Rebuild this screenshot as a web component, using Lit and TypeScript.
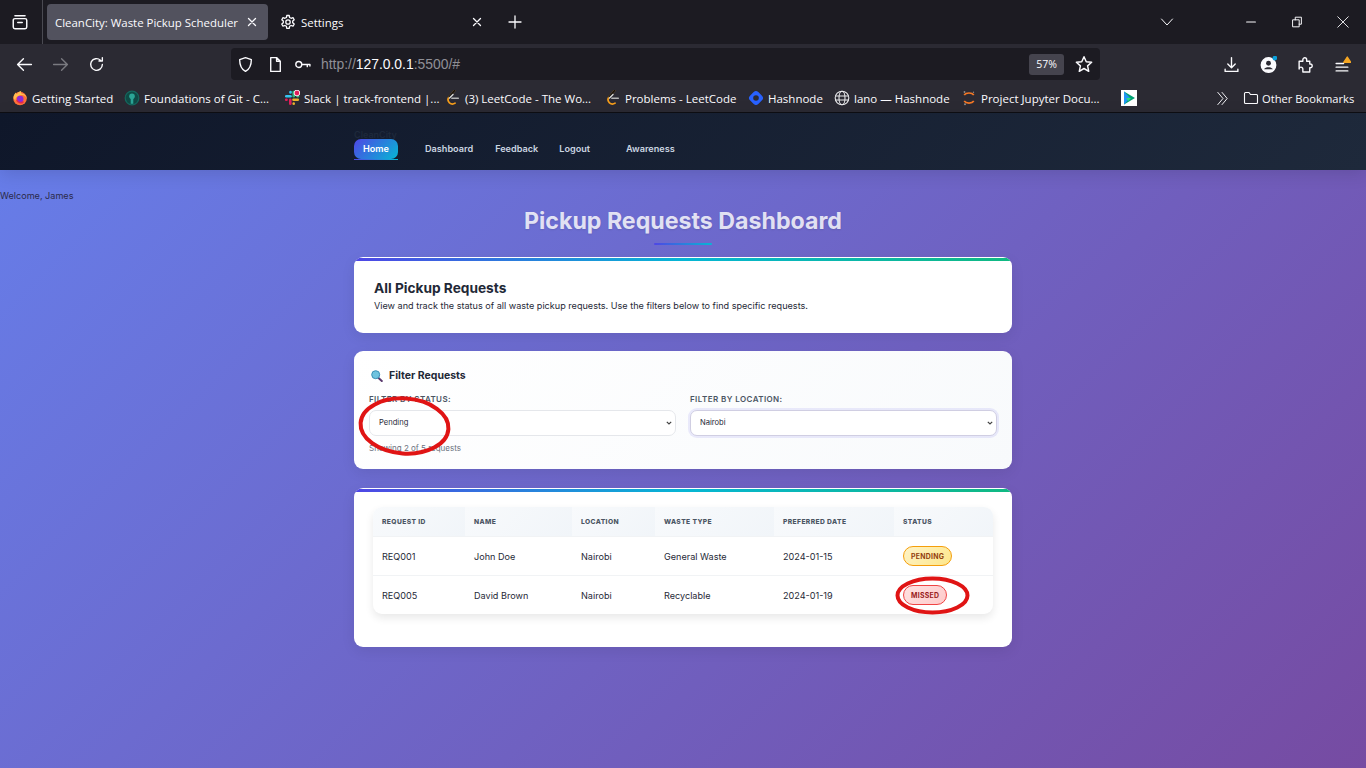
import { LitElement, html, css, svg } from 'lit';
import { customElement } from 'lit/decorators.js';

const ic = (body: unknown, size = 16, vb = 16) => html`<svg width=${size} height=${size} viewBox="0 0 ${vb} ${vb}" fill="none" stroke="currentColor" stroke-width="1.3" stroke-linecap="round" stroke-linejoin="round">${body}</svg>`;

const leet = svg`<path d="M9.500.8 4.200 6.800c-1.700 2-1.400 4.300.3 6 1.700 1.500 3.800 1.500 5.600.3" stroke="#f89f1b" stroke-width="1.700"/><path d="M9.500.8 4.200 6.800" stroke="#111" stroke-width="1.700"/><path d="M6.800 8.300h6.500" stroke="#b3b3b3" stroke-width="1.500"/><path d="M4.500 8 8 4.500M12 4.500" stroke="#d8d8d8" stroke-width="1.400"/>`;

const bookmarks = [
  { label: 'Getting Started', width: 112, icon: svg`<circle cx="8" cy="8.500" r="6.800" fill="#ff7139" stroke="none"/><path d="M1.500 8c0-3 1.500-4.500 2.500-5.500 0 1 .5 1.500 1 1.500C6 2.500 8 1 9.500.8c-.8 1.200-.6 2.200 0 2.700 3 .3 5.500 2.500 5.300 5.500C14 6 11.500 4.500 8.500 5.200 5 6 3 8 3.500 11z" fill="#ffbd4f" stroke="none"/><circle cx="8.200" cy="9" r="3.300" fill="#8b2ad8" stroke="none"/><path d="M5 10.500c1 2 4 3 6 1.500" stroke="#e22850" stroke-width="1.600"/>` },
  { label: 'Foundations of Git - C...', width: 160, icon: svg`<circle cx="8" cy="8" r="6.800" fill="#0f4a45" stroke="#14695f" stroke-width="1.200"/><circle cx="8" cy="6.300" r="2.800" fill="#2ba596" stroke="none"/><path d="M6.700 8h2.600v5.800H6.700z" fill="#2ba596" stroke="none"/>` },
  { label: 'Slack | track-frontend |...', width: 161, icon: svg`<g stroke-width="2.600"><path d="M2.300 6.300h4.200" stroke="#36c5f0"/><path d="M6.500 2v.5" stroke="#36c5f0"/><path d="M9.700 2v4.300" stroke="#2eb67d"/><path d="M13.800 6.300h.1" stroke="#2eb67d"/><path d="M13.800 9.700H9.500" stroke="#ecb22e"/><path d="M9.700 13.800v-.3" stroke="#ecb22e"/><path d="M6.300 13.800V9.700" stroke="#e01e5a"/><path d="M2.200 9.700h.3" stroke="#e01e5a"/></g><circle cx="13" cy="3" r="2.900" fill="#e01e5a" stroke="#fff" stroke-width=".9"/>` },
  { label: '(3) LeetCode - The Wo...', width: 160, icon: leet },
  { label: 'Problems - LeetCode', width: 143, icon: leet },
  { label: 'Hashnode', width: 86, icon: svg`<rect x="2.900" y="2.900" width="10.200" height="10.200" rx="2.500" fill="#2962ff" stroke="#2962ff" stroke-width="1.500" transform="rotate(45 8 8)"/><circle cx="8" cy="8" r="2.800" fill="#2b2a33" stroke="none"/>` },
  { label: 'lano — Hashnode', width: 127, icon: svg`<g stroke="#e8e8ea" stroke-width="1.100"><circle cx="8" cy="8" r="6.800"/><ellipse cx="8" cy="8" rx="3" ry="6.800"/><path d="M1.500 6h13M1.500 10h13"/></g>` },
  { label: 'Project Jupyter Docu...', width: 160, icon: svg`<path d="M3.200 5C5 2.300 11 2.300 12.800 5M3.200 11c1.800 2.700 7.800 2.700 9.600 0" stroke="#f37726" stroke-width="1.700" stroke-linecap="butt"/><circle cx="3.500" cy="2" r=".9" fill="#8d8d8d" stroke="none"/><circle cx="12.500" cy="2.300" r=".7" fill="#8d8d8d" stroke="none"/><circle cx="4" cy="14.300" r="1" fill="#8d8d8d" stroke="none"/>` },
  { label: '', width: 94, icon: svg`<rect width="16" height="16" fill="#fff" stroke="none"/><path d="M3 1.500v13l11-6.500z" fill="#00a173" stroke="none"/><path d="M3 1.500l6 6.500-6 6.500z" fill="#2196f3" stroke="none"/><path d="M5 8h5l-2.500 3z" fill="#29e07f" stroke="none"/>` },
];

const requests = [
  { id: 'REQ001', name: 'John Doe', location: 'Nairobi', type: 'General Waste', date: '2024-01-15', status: 'Pending' },
  { id: 'REQ005', name: 'David Brown', location: 'Nairobi', type: 'Recyclable', date: '2024-01-19', status: 'Missed' },
];

@customElement('browser-chrome')
export class BrowserChrome extends LitElement {
  static styles = css`
    :host { display: block; font-family: "Open Sans", "Noto Sans", sans-serif; color: #fbfbfe; }
    .tabs { height: 44px; background: #1c1b22; display: flex; align-items: center; }
    .tab-view { height: 44px; display: flex; align-items: center; justify-content: center; border-right: 1px solid #4a4a52; margin-right: 4px; width: 39px; padding-right: 3px; }
    .tab { height: 36px; border-radius: 4px; display: flex; align-items: center; font-size: 11.450px; box-sizing: border-box; }
    .tab.active { width: 221px; background: #52525e; padding: 0 8px; justify-content: space-between; }
    .tab.settings { width: 224px; padding: 0 7px 0 12px; gap: 5px; }
    .tab.settings .close { margin-left: auto; }
    .close { width: 16px; height: 16px; display: flex; }
    .new { margin-left: 15px; display: flex; }
    .win { margin-left: auto; display: flex; align-items: center; height: 44px; }
    .win .all { margin-right: 53px; display: flex; }
    .win .btn { width: 46px; display: flex; justify-content: center; }
    .toolbar { height: 40px; background: #2b2a33; display: flex; align-items: center; }
    .nav-btn { width: 36px; display: flex; justify-content: center; }
    .nav-btn:first-child { margin-left: 6px; }
    .dim { color: #7a7a80; }
    .url { margin-left: 117px; width: 869px; height: 32px; border-radius: 4px; background: #1c1b22; display: flex; align-items: center; box-sizing: border-box; padding: 0 7px; }
    .url svg { flex: none; }
    .url span { display: flex; }
    .url .shield { margin-right: 13px; margin-left: -1px; }
    .url .doc { margin-right: 10px; }
    .url .key { margin-right: 10px; }
    .url .addr { display: block; font-size: 13.900px; color: #8f8f96; font-family: "Liberation Sans", sans-serif; }
    .addr b { color: #fbfbfe; font-weight: 400; }
    .url .zoom { margin-left: auto; margin-right: 11px; width: 35px; height: 21px; border-radius: 3px; background: #45444e; font-size: 10.500px; align-items: center; justify-content: center; }
    .tools { margin-left: auto; display: flex; align-items: center; gap: 20px; padding-right: 15px; }
    .tools span { display: flex; }
    .bookmarks { height: 28px; background: #2b2a33; display: flex; align-items: center; padding-left: 12px; font-size: 11.500px; }
    .bm { display: flex; align-items: center; gap: 4px; white-space: nowrap; flex: none; }
    .bm svg { flex: none; }
    .more { margin-left: auto; display: flex; align-items: center; margin-right: 12px; white-space: nowrap; font-size: 11.200px; }
    .more .chev { margin-right: 13px; display: flex; }
    .more .folder { display: flex; margin-right: 3px; }
  `;

  render() {
    return html`
      <div class="tabs">
        <div class="tab-view">${ic(svg`<rect x="2" y="5" width="12" height="9" rx="1.500"/><path d="M3.500 2.500h9M6 8.500h4"/>`, 18)}</div>
        <div class="tab active">
          <span>CleanCity: Waste Pickup Scheduler</span>
          <span class="close">${ic(svg`<path d="M4.500 4.500l7 7M11.500 4.500l-7 7"/>`)}</span>
        </div>
        <div class="tab settings">
          ${ic(svg`<circle cx="8" cy="8" r="2.200"/><path d="M6.800 1.500h2.400l.4 2 1.500.8 1.900-.7 1.200 2.100-1.500 1.300v1.800l1.500 1.300-1.200 2.100-1.900-.7-1.500.8-.4 2H6.800l-.4-2-1.500-.8-1.900.7-1.200-2.100 1.500-1.300V7L1.800 5.700 3 3.600l1.900.7 1.500-.8z"/>`)}
          <span>Settings</span>
          <span class="close">${ic(svg`<path d="M4.500 4.500l7 7M11.500 4.500l-7 7"/>`)}</span>
        </div>
        <span class="new">${ic(svg`<path d="M8 2v12M2 8h12"/>`)}</span>
        <div class="win">
          <span class="all">${ic(svg`<path d="M2.500 5 8 11l5.500-6" stroke-width="1"/>`)}</span>
          <span class="btn">${ic(svg`<path d="M3 8h10" />`, 14)}</span>
          <span class="btn">${ic(svg`<path d="M3.500 5.500h7v8h-7zM6 5.500V2.500h7v8h-2.500" stroke-linecap="square" stroke-width="1.100"/>`, 14)}</span>
          <span class="btn">${ic(svg`<path d="M2 2l12 12M14 2 2 14" stroke-width="1"/>`, 14)}</span>
        </div>
      </div>
      <div class="toolbar">
        <span class="nav-btn">${ic(svg`<path d="M14.500 8h-13M7 2.500 1.500 8 7 13.500"/>`, 17)}</span>
        <span class="nav-btn dim">${ic(svg`<path d="M1.500 8h13M9 2.500 14.500 8 9 13.500"/>`, 17)}</span>
        <span class="nav-btn">${ic(svg`<path d="M13.500 8a5.500 5.500 0 1 1-1.800-4.100M13.500 1.500v3.200h-3.200"/>`, 17)}</span>
        <div class="url">
          <span class="shield">${ic(svg`<path d="M8 1.500 2.500 3.500c0 5 1 8.500 5.500 11 4.500-2.500 5.500-6 5.500-11z"/>`, 17)}</span>
          <span class="doc">${ic(svg`<path d="M3.500 1.500h5.500l3.500 3.500v9.500h-9zM9 1.500V5h3.500"/>`, 17)}</span>
          <span class="key">${ic(svg`<circle cx="4.500" cy="8" r="2.800"/><path d="M7.500 8H15M12.500 8v2M15 8v1.500"/>`, 17)}</span>
          <span class="addr">http://<b>127.0.0.1</b>:5500/#</span>
          <span class="zoom">57%</span>
          <span>${ic(svg`<path d="M8 1.500 10 6l4.800.5-3.600 3.200 1 4.800L8 12l-4.200 2.500 1-4.800L1.200 6.500 6 6z"/>`, 18)}</span>
        </div>
        <div class="tools">
          <span>${ic(svg`<path d="M8 1.500v9M4.500 7.500 8 11l3.500-3.500M2 12.500v2h12v-2"/>`, 17)}</span>
          <span>${ic(svg`<circle cx="8" cy="8.500" r="6.800" fill="currentColor"/><circle cx="8" cy="6.800" r="2.300" fill="#2b2a33" stroke="none"/><path d="M3.900 12.500c1-2.500 7.200-2.500 8.200 0" fill="#2b2a33" stroke="none"/><circle cx="14" cy="2" r="2.200" fill="#0a9ed9" stroke="none"/>`, 17)}</span>
          <span>${ic(svg`<path d="M2 5h3.500V3.500a1.800 1.800 0 0 1 3.600 0V5h2.900v2.500h.5a1.800 1.800 0 0 1 0 3.600H12V15H5.500v-2.800a1.700 1.700 0 0 0-3.500 0z"/>`, 17)}</span>
          <span>${ic(svg`<path d="M2 7h7M2 10.500h11M2 14h11"/><path d="M12.500 1 15.800 6H9.200z" fill="#f5a623" stroke="#f5a623"/>`, 17)}</span>
        </div>
      </div>
      <div class="bookmarks">
        ${bookmarks.map((b) => html`<div class="bm" style="width:${b.width}px">${ic(b.icon)}<span>${b.label}</span></div>`)}
        <div class="more">
          <span class="chev">${ic(svg`<path d="M3 1.500 8.500 8 3 14.500M7.500 1.500 13 8l-5.500 6.500" stroke-width="1"/>`, 15)}</span>
          <span class="folder">${ic(svg`<path d="M1.500 12.500v-9A1 1 0 0 1 2.500 2.500h3.500l1.500 2h6a1 1 0 0 1 1 1v7a1 1 0 0 1-1 1h-11a1 1 0 0 1-1-1z" stroke-width="1.100"/>`)}</span>
          <span>Other Bookmarks</span>
        </div>
      </div>
    `;
  }
}

@customElement('app-root')
export class AppRoot extends LitElement {
  static styles = css`
    :host { display: block; width: 1366px; height: 768px; overflow: hidden; font-family: Inter, "Liberation Sans", sans-serif; }
    .page { position: relative; height: 656px; background: linear-gradient(135deg, #667eea 0%, #764ba2 100%); color: #1f2937; }
    .top { height: 58px; box-sizing: border-box; border-top: 1px solid #0d0d12; background: linear-gradient(135deg, #0f172a, #1e293b); box-shadow: 0 4px 16px rgba(0,0,0,.12); padding-left: 354px; position: relative; }
    .brand { position: absolute; top: 16px; left: 354px; font-size: 9px; font-weight: 600; color: #1e293b; }
    .links { display: flex; align-items: flex-start; height: 20px; margin-top: 26px; font-size: 9.150px; line-height: 19px; font-weight: 600; color: #cbd5e1; }
    .links a { flex: none; }
    .home { width: 44px; height: 20px; box-sizing: border-box; border-radius: 7px; background: linear-gradient(135deg, #4f46e5, #06b6d4); color: #fff; text-align: center; margin-right: 27px; position: relative; }
    .home::after { content: ""; position: absolute; left: 0; right: 0; bottom: -1px; height: 1px; background: linear-gradient(90deg, #4f46e5, #06b6d4); }
    .links a:nth-child(2) { margin-right: 22px; }
    .links a:nth-child(3) { margin-right: 21px; }
    .links a:nth-child(4) { margin-right: 36px; }
    .welcome { font-size: 9.100px; color: #2b2a4a; margin-top: 20px; line-height: 11px; }
    h1 { margin: 6px 0 0; font-size: 23.200px; line-height: 28px; font-weight: 700; text-align: center; color: rgba(255,255,255,.82); text-shadow: 0 1px 2px rgba(0,0,0,.1); }
    .rule { width: 58px; height: 2px; margin: 8px auto 0; background: linear-gradient(90deg, #4f46e5, #06b6d4); border-radius: 1px; }
    .wrap { width: 658px; margin: 12px auto 0; display: flex; flex-direction: column; gap: 18px; }
    .card { position: relative; background: #fff; border-radius: 9px; overflow: hidden; box-shadow: 0 4px 14px rgba(0,0,0,.08); box-sizing: border-box; }
    .bar::before { content: ""; position: absolute; inset: 1px 0 auto 0; height: 2.500px; background: linear-gradient(90deg, #4f46e5, #06b6d4, #10b981); }
    .intro { height: 76px; padding: 22px 20px 0; }
    h2 { margin: 0; font-size: 13.700px; line-height: 18px; font-weight: 700; color: #1f2937; }
    .intro p { margin: 2px 0 0; font-size: 9.100px; line-height: 14px; color: #1f2937; }
    .filters { height: 118px; padding: 17px 15px 0; background: linear-gradient(135deg, #fff, #f8fafc); }
    h3 { margin: 0; display: flex; align-items: center; gap: 6px; font-size: 10.500px; line-height: 16px; font-weight: 700; color: #1f2937; padding-left: 2px; }
    .grid { display: grid; grid-template-columns: 307px 307px; column-gap: 14px; margin-top: 10px; }
    label { display: block; font-size: 8px; line-height: 10px; font-weight: 600; letter-spacing: .42px; text-transform: uppercase; color: #4b5563; margin-bottom: 5px; }
    select { appearance: none; width: 100%; height: 26px; border: 1px solid #e5e7eb; border-radius: 7px; font: 400 7.600px Inter, sans-serif; color: #1f2937; padding: 0 9px; outline: none; background: #fff url("data:image/svg+xml,%3Csvg xmlns='http://www.w3.org/2000/svg' width='6' height='4'%3E%3Cpath d='M.8.8 3 3l2.200-2.200' fill='none' stroke='%23444' stroke-width='1.200'/%3E%3C/svg%3E") no-repeat right 3px center; }
    select.focus { border-color: #d0cee2; box-shadow: 0 0 0 2px rgba(79,70,229,.1); }
    .count { font-size: 8px; line-height: 10px; color: #6b7280; margin-top: 7px; }
    .list { height: 159px; padding: 19px 19px 0; margin-top: 1px; }
    table { width: 620px; table-layout: fixed; border-collapse: separate; border-spacing: 0; border-radius: 9px; box-shadow: 0 4px 8px rgba(0,0,0,.09); font-size: 9.100px; color: #1f2937; }
    th { height: 30px; box-sizing: border-box; padding: 0 9px; text-align: left; font-size: 6.700px; font-weight: 800; letter-spacing: .4px; text-transform: uppercase; color: #4b5563; background: linear-gradient(135deg, #f8fafc, #f1f5f9); border-bottom: 1px solid #f1f3f5; }
    th:first-child { border-top-left-radius: 9px; width: 92px; }
    th:nth-child(2) { width: 107px; }
    th:nth-child(3) { width: 83px; }
    th:nth-child(4) { width: 119px; }
    th:nth-child(5) { width: 120px; }
    th:last-child { border-top-right-radius: 9px; }
    td { height: 39px; box-sizing: border-box; padding: 0 9px; border-bottom: 1px solid #f1f3f5; }
    tr:last-child td { border-bottom: 0; height: 38px; }
    .pill { display: inline-block; padding: 0 7px; height: 20px; line-height: 19.500px; box-sizing: border-box; border-radius: 10px; font-size: 6.900px; font-weight: 700; letter-spacing: .3px; text-transform: uppercase; vertical-align: middle; }
    .Pending { background: linear-gradient(135deg, #fef3c7, #fde68a); border: 1px solid #f59e0b; color: #92400e; }
    .Missed { background: linear-gradient(135deg, #fee2e2, #fecaca); border: 1px solid #ef4444; color: #991b1b; }
    .marks { position: absolute; left: 0; top: 0; pointer-events: none; }
  `;

  render() {
    return html`
      <browser-chrome></browser-chrome>
      <div class="page">
        <div class="top">
          <span class="brand">CleanCity</span>
          <nav class="links">
            <a class="home">Home</a>
            <a>Dashboard</a>
            <a>Feedback</a>
            <a>Logout</a>
            <a>Awareness</a>
          </nav>
        </div>
        <div class="welcome">Welcome, James</div>
        <h1>Pickup Requests Dashboard</h1>
        <div class="rule"></div>
        <div class="wrap">
          <section class="card bar intro">
            <h2>All Pickup Requests</h2>
            <p>View and track the status of all waste pickup requests. Use the filters below to find specific requests.</p>
          </section>
          <section class="card filters">
            <h3>
              <svg width="12" height="12" viewBox="0 0 12 12"><path d="M7 7.500 10.800 11" stroke="#5b3a6e" stroke-width="2" stroke-linecap="round"/><circle cx="4.700" cy="4.700" r="4" fill="#6fc3df" stroke="#3a8fb5"/></svg>
              Filter Requests
            </h3>
            <div class="grid">
              <div>
                <label>Filter by Status:</label>
                <select><option>Pending</option><option>Missed</option></select>
              </div>
              <div>
                <label>Filter by Location:</label>
                <select class="focus"><option>Nairobi</option></select>
              </div>
            </div>
            <div class="count">Showing 2 of 5 requests</div>
          </section>
          <section class="card bar list">
            <table>
              <thead><tr><th>Request ID</th><th>Name</th><th>Location</th><th>Waste Type</th><th>Preferred Date</th><th>Status</th></tr></thead>
              <tbody>
                ${requests.map((r) => html`<tr><td>${r.id}</td><td>${r.name}</td><td>${r.location}</td><td>${r.type}</td><td>${r.date}</td><td><span class="pill ${r.status}">${r.status}</span></td></tr>`)}
              </tbody>
            </table>
          </section>
        </div>
        <svg class="marks" width="1366" height="656" fill="none" stroke="#e01414" stroke-width="4">
          <ellipse cx="404.500" cy="314" rx="44" ry="27.500" transform="rotate(4 404.500 314)"/>
          <ellipse cx="932.500" cy="483.500" rx="35" ry="17"/>
        </svg>
      </div>
    `;
  }
}
